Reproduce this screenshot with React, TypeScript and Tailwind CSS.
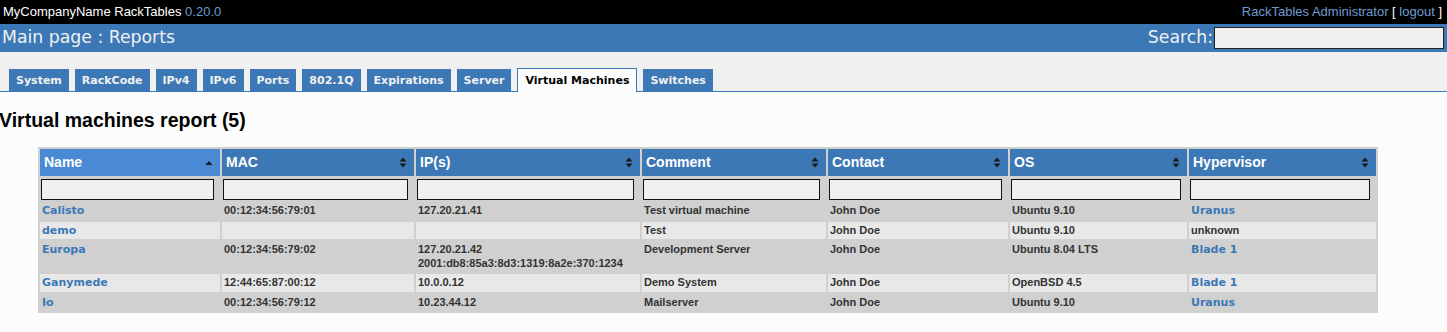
import React from "react";

const tabs = ["System", "RackCode", "IPv4", "IPv6", "Ports", "802.1Q", "Expirations", "Server", "Virtual Machines", "Switches"];

type Row = { name: string; mac: string; ips: string[]; comment: string; contact: string; os: string; hv: string; hvLink: boolean };
const rows: Row[] = [
  { name: "Calisto", mac: "00:12:34:56:79:01", ips: ["127.20.21.41"], comment: "Test virtual machine", contact: "John Doe", os: "Ubuntu 9.10", hv: "Uranus", hvLink: true },
  { name: "demo", mac: "", ips: [], comment: "Test", contact: "John Doe", os: "Ubuntu 9.10", hv: "unknown", hvLink: false },
  { name: "Europa", mac: "00:12:34:56:79:02", ips: ["127.20.21.42", "2001:db8:85a3:8d3:1319:8a2e:370:1234"], comment: "Development Server", contact: "John Doe", os: "Ubuntu 8.04 LTS", hv: "Blade 1", hvLink: true },
  { name: "Ganymede", mac: "12:44:65:87:00:12", ips: ["10.0.0.12"], comment: "Demo System", contact: "John Doe", os: "OpenBSD 4.5", hv: "Blade 1", hvLink: true },
  { name: "Io", mac: "00:12:34:56:79:12", ips: ["10.23.44.12"], comment: "Mailserver", contact: "John Doe", os: "Ubuntu 9.10", hv: "Uranus", hvLink: true },
];

const cols = [
  { label: "Name", w: "w-[180px]", sorted: true },
  { label: "MAC", w: "w-[192px]", sorted: false },
  { label: "IP(s)", w: "w-[224px]", sorted: false },
  { label: "Comment", w: "w-[184px]", sorted: false },
  { label: "Contact", w: "w-[180px]", sorted: false },
  { label: "OS", w: "w-[177px]", sorted: false },
  { label: "Hypervisor", w: "w-[187px]", sorted: false },
];

function SortIcon({ sorted }: { sorted: boolean }) {
  if (sorted) {
    return (
      <svg width="8" height="8" viewBox="0 0 8 8" className="shrink-0">
        <path d="M0.5 6 L4 2 L7.5 6 Z" fill="#1a1a1a" />
      </svg>
    );
  }
  return (
    <svg width="8" height="11" viewBox="0 0 8 11" className="shrink-0">
      <path d="M0.5 4.5 L4 0.5 L7.5 4.5 Z" fill="#1a1a1a" />
      <path d="M0.5 6.5 L4 10.5 L7.5 6.5 Z" fill="#1a1a1a" />
    </svg>
  );
}

const linkCls = "text-[#3c78b5] font-bold font-['DejaVu_Sans',Verdana,sans-serif] text-[11px]";

export default function App() {
  return (
    <div className="min-h-[332px] bg-[#fcfcfc] font-['Liberation_Sans',Arial,sans-serif]">
      {/* top bar */}
      <div className="flex h-[24px] items-center justify-between bg-black pl-[3px] pr-[5px] text-[13px] text-white">
        <div>
          MyCompanyName RackTables <span className="text-[#6f9bd1]">0.20.0</span>
        </div>
        <div>
          <span className="text-[#6f9bd1]">RackTables Administrator</span> [ <span className="text-[#6f9bd1]">logout</span> ]
        </div>
      </div>
      {/* blue bar */}
      <div className="flex h-[28px] items-center justify-between bg-[#3c78b5] pl-[2px] pr-[3px] font-['DejaVu_Sans',Verdana,sans-serif] text-[17.3px] text-[#f0f0f0]">
        <div className="leading-none">Main page : Reports</div>
        <div className="flex items-center leading-none">
          <span>Search:</span>
          <input className="ml-[1px] h-[22px] w-[230px] border border-[#222] bg-[#f0f0f0] outline-none" />
        </div>
      </div>
      {/* tabs */}
      <div className="flex h-[40px] items-end gap-[6px] border-b border-[#3c78b5] bg-[#f0f0f0] pl-[9px]">
        {tabs.map((t) => {
          const active = t === "Virtual Machines";
          return (
            <div
              key={t}
              className={
                "flex items-center px-[7px] pt-[2px] font-['DejaVu_Sans',Verdana,sans-serif] text-[11px] font-bold " +
                (active
                  ? "-mb-px h-[24px] border border-b-0 border-[#3c78b5] bg-[#fcfcfc] text-black"
                  : "h-[22px] bg-[#3c78b5] text-[#f0f0f0]")
              }
            >
              {t}
            </div>
          );
        })}
      </div>
      {/* heading */}
      <h2 className="ml-[-1px] mt-[16px] text-[19.5px] font-bold leading-[24px] text-black">Virtual machines report (5)</h2>
      {/* table */}
      <div className="mt-[15px] pl-[38px]">
        <table className="table-fixed border-separate border-spacing-[2px] bg-[#d0d0d0] text-[11px]">
          <thead>
            <tr>
              {cols.map((c) => (
                <th
                  key={c.label}
                  className={
                    c.w +
                    " h-[27px] px-[4px] text-left text-[14px] font-bold text-white " +
                    (c.sorted ? "bg-[#4a8ad4]" : "bg-[#3c78b5]")
                  }
                >
                  <div className="flex items-center justify-between pr-[3px]">
                    <span>{c.label}</span>
                    <SortIcon sorted={c.sorted} />
                  </div>
                </th>
              ))}
            </tr>
            <tr>
              {cols.map((c) => (
                <td key={c.label} className="p-0 pt-[1px] pl-[1px] pr-[6px]">
                  <input className="block h-[21px] w-full border border-[#111] bg-[#f0f0f0] outline-none" />
                </td>
              ))}
            </tr>
          </thead>
          <tbody>
            {rows.map((r, i) => {
              const bg = i % 2 === 0 ? "bg-[#d0d0d0]" : "bg-[#e8e8e8]";
              const td = bg + " align-top px-[2px] py-[2px] font-bold text-[#333] leading-[13.5px]";
              return (
                <tr key={r.name}>
                  <td className={td}>
                    <span className={linkCls}>{r.name}</span>
                  </td>
                  <td className={td}>{r.mac}</td>
                  <td className={td}>
                    {r.ips.map((ip) => (
                      <div key={ip}>{ip}</div>
                    ))}
                  </td>
                  <td className={td}>{r.comment}</td>
                  <td className={td}>{r.contact}</td>
                  <td className={td}>{r.os}</td>
                  <td className={td}>
                    {r.hvLink ? <span className={linkCls}>{r.hv}</span> : r.hv}
                  </td>
                </tr>
              );
            })}
          </tbody>
        </table>
      </div>
    </div>
  );
}
